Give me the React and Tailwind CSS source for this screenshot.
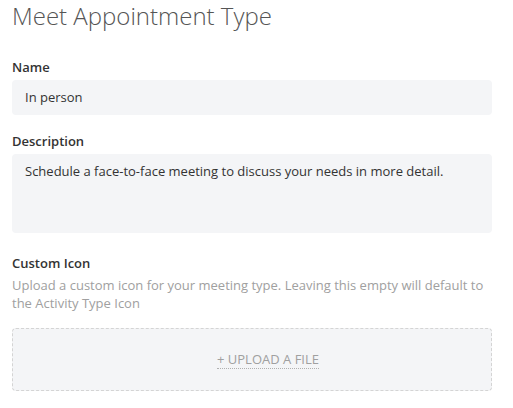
import React from "react";

const Label = ({ children, className = "" }) => (
  <div className={`text-[13px] leading-[18px] font-semibold text-[#333] ${className}`}>{children}</div>
);

export default function App() {
  return (
    <div className="bg-white min-h-screen w-[513px] h-[408px] overflow-hidden px-3" style={{ fontFamily: '"Open Sans", sans-serif' }}>
      <h1 className="text-[24px] leading-[30px] font-light text-[#555] pt-[1px]">Meet Appointment Type</h1>

      <Label className="mt-[27px]">Name</Label>
      <div className="mt-1 h-[35px] w-[480px] rounded bg-[#f4f5f7] flex items-center px-[13px] text-[13px] text-[#333]">
        In person
      </div>

      <Label className="mt-[17px]">Description</Label>
      <div className="mt-1 h-[79px] w-[480px] rounded bg-[#f4f5f7] px-[13px] pt-[8px] text-[13px] leading-[18px] text-[#333]">
        Schedule a face-to-face meeting to discuss your needs in more detail.
      </div>

      <Label className="mt-[21px]">Custom Icon</Label>
      <p className="mt-1 text-[13px] leading-[18px] text-[#a0a0a0]">
        Upload a custom icon for your meeting type. Leaving this empty will default to the Activity Type Icon
      </p>

      <div className="mt-4 h-[63px] w-[480px] rounded border border-dashed border-[#d4d4d4] bg-[#f4f5f7] flex items-center justify-center pl-[32px]">
        <span className="text-[13px] leading-[18px] text-[#a0a0a0] border-b border-dotted border-[#b0b0b0]">+ UPLOAD A FILE</span>
      </div>
    </div>
  );
}
